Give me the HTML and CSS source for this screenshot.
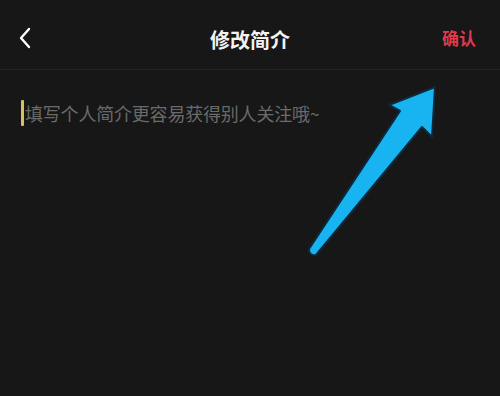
FILE: index.html
```html
<!DOCTYPE html>
<html lang="zh-CN">
<head>
  <meta charset="UTF-8">
  <title>修改简介</title>
  <link rel="stylesheet" href="styles.css">
</head>
<body>
  <div class="page">
    <header class="top-bar">
      <button class="back-btn" aria-label="返回">
        <svg width="14" height="22" viewBox="0 0 14 22"><path d="M11 2 L3 11 L11 20" fill="none" stroke="#fff" stroke-width="2.4" stroke-linecap="round" stroke-linejoin="round"/></svg>
      </button>
      <h1 class="title">修改简介</h1>
      <button class="confirm-btn">确认</button>
    </header>

    <div class="bio-input">
      <span class="caret"></span>
      <span class="placeholder">填写个人简介更容易获得别人关注哦~</span>
    </div>

    <!-- annotation arrow pointing at the confirm button -->
    <svg class="pointer" width="500" height="396" viewBox="0 0 500 396">
      <path d="M435 87 L432 137 L422 127 L316 255 Q309 256 309 249 L400 111 L389 105 Z"
            fill="#18b4f2" stroke="#0d2a3a" stroke-width="2" stroke-linejoin="round"/>
    </svg>
  </div>
</body>
</html>
```
FILE: styles.css
```css
body {
  margin: 0;
  background-color: #161616;
  font-family: "Noto Sans CJK SC", "Noto Sans", sans-serif;
}

.page {
  position: relative;
  width: 500px;
  height: 396px;
  overflow: hidden;
  background-color: #171717;
}

.top-bar {
  display: flex;
  align-items: center;
  justify-content: space-between;
  height: 70px;
  padding: 6px 24px 0 18px;
  border-bottom: 1px solid #242424;
  box-sizing: border-box;
  position: relative;
}

.back-btn {
  background: none;
  border: none;
  padding: 0;
  width: 24px;
  height: 30px;
  display: flex;
  align-items: center;
}

.title {
  position: absolute;
  left: 0;
  right: 0;
  text-align: center;
  margin: 0;
  padding-top: 4px;
  font-size: 20px;
  font-weight: 700;
  color: #f2f2f2;
  pointer-events: none;
}

.confirm-btn {
  background: none;
  border: none;
  padding: 0;
  font-family: inherit;
  font-size: 17px;
  font-weight: 700;
  color: #de3a4c;
}

.bio-input {
  display: flex;
  align-items: center;
  padding: 30px 0 0 21px;
}

.caret {
  width: 3px;
  height: 26px;
  background-color: #d8c05a;
  border-radius: 1px;
  margin-right: 1px;
}

.placeholder {
  font-size: 18px;
  color: #6a6a6a;
  letter-spacing: -0.2px;
}

.pointer {
  position: absolute;
  top: 0;
  left: 0;
}
```
